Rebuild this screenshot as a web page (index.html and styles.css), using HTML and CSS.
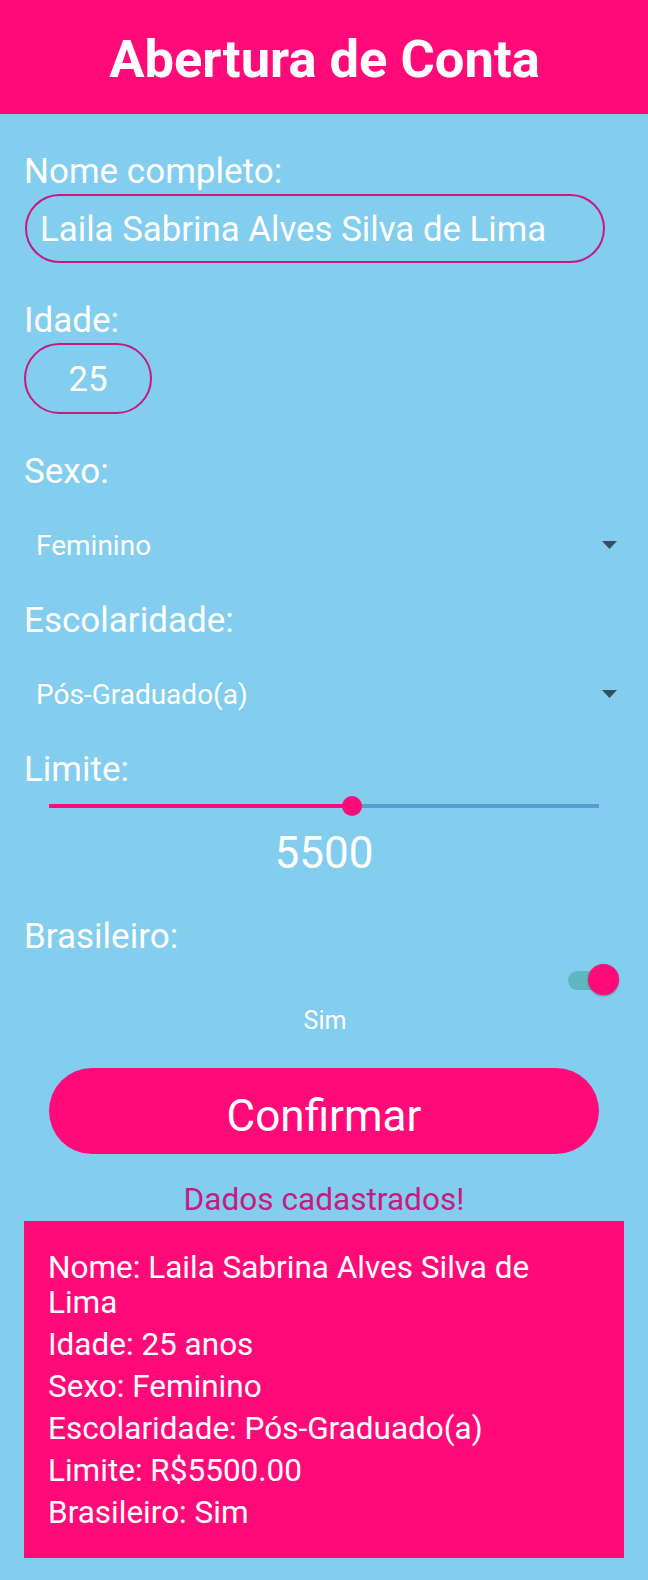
FILE: index.html
```html
<!DOCTYPE html>
<html lang="pt-BR">
<head>
<meta charset="utf-8">
<title>Abertura de Conta</title>
<link rel="stylesheet" href="styles.css">
</head>
<body>
<header class="app-bar">
  <h1 class="app-title">Abertura de Conta</h1>
</header>
<main class="form">
  <label class="label label-first">Nome completo:</label>
  <div class="input input-name">Laila Sabrina Alves Silva de Lima</div>

  <label class="label">Idade:</label>
  <div class="input input-age">25</div>

  <label class="label">Sexo:</label>
  <div class="dropdown">
    <span class="dropdown-text">Feminino</span>
    <svg class="dropdown-arrow" width="15" height="8" viewBox="0 0 15 8"><path d="M0 0 H15 L7.5 8 Z" fill="#34505f"/></svg>
  </div>

  <label class="label label-after-dd">Escolaridade:</label>
  <div class="dropdown">
    <span class="dropdown-text">Pós-Graduado(a)</span>
    <svg class="dropdown-arrow" width="15" height="8" viewBox="0 0 15 8"><path d="M0 0 H15 L7.5 8 Z" fill="#34505f"/></svg>
  </div>

  <label class="label label-after-dd">Limite:</label>
  <div class="slider">
    <div class="slider-track">
      <div class="slider-active" style="width: 55%"></div>
      <div class="slider-thumb" style="left: 55%"></div>
    </div>
  </div>
  <div class="slider-value">5500</div>

  <label class="label label-brasileiro">Brasileiro:</label>
  <div class="switch-row">
    <div class="switch">
      <div class="switch-track"></div>
      <div class="switch-thumb"></div>
    </div>
  </div>
  <div class="switch-state">Sim</div>

  <button class="confirm">Confirmar</button>

  <p class="status">Dados cadastrados!</p>

  <section class="summary">
    <p class="summary-line">Nome: Laila Sabrina Alves Silva de Lima</p>
    <p class="summary-line">Idade: 25 anos</p>
    <p class="summary-line">Sexo: Feminino</p>
    <p class="summary-line">Escolaridade: Pós-Graduado(a)</p>
    <p class="summary-line">Limite: R$5500.00</p>
    <p class="summary-line">Brasileiro: Sim</p>
  </section>
</main>
</body>
</html>
```

FILE: styles.css
```css
* { box-sizing: border-box; }

html, body {
  margin: 0;
  padding: 0;
}

body {
  background: #83cdee;
  font-family: Roboto, "Noto Sans", "Liberation Sans", sans-serif;
  color: #ffffff;
  min-height: 1580px;
}

.app-bar {
  background: #ff0a78;
  height: 114px;
  padding-top: 4px;
  text-align: center;
}

.app-title {
  margin: 0;
  font-size: 52.5px;
  font-weight: 700;
  line-height: 110px;
  padding-left: 1px;
}

.form {
  display: flex;
  flex-direction: column;
  align-items: stretch;
  padding: 0 24px 0 24px;
}

.label {
  display: block;
  font-size: 35px;
  line-height: 40px;
  margin-top: 38px;
  padding-left: 0;
}

.label-first { margin-top: 38px; }
.label-after-dd { margin-top: 25px; }
.label-brasileiro { margin-top: 39px; }

.input {
  margin-top: 2px;
  border: 2px solid #c8197f;
  border-radius: 36px;
  font-size: 34.8px;
  line-height: 40px;
  padding: 12.5px 0;
}

.input-name {
  margin-left: 1px;
  margin-right: 19px;
  padding-left: 13px;
}

.input-age {
  width: 128px;
  height: 71px;
  margin-top: 2px;
  text-align: center;
  padding: 13.5px 0;
}

.dropdown {
  margin-top: 24px;
  height: 60px;
  display: flex;
  align-items: center;
  justify-content: space-between;
  padding-left: 12px;
  padding-right: 7px;
}

.dropdown-text {
  font-size: 28px;
  line-height: 36px;
}

.dropdown-arrow {
  display: block;
  margin-top: -2px;
}

.slider {
  height: 32px;
  padding: 0 25px;
  display: flex;
  align-items: center;
}

.slider-track {
  position: relative;
  flex: 1;
  height: 4px;
  background: #5b9bd0;
}

.slider-active {
  height: 100%;
  background: #ff0a78;
}

.slider-thumb {
  position: absolute;
  top: 50%;
  width: 20px;
  height: 20px;
  margin: -10px 0 0 -10px;
  border-radius: 50%;
  background: #ff0a78;
}

.slider-value {
  margin-top: 6px;
  text-align: center;
  font-size: 44px;
  line-height: 50px;
}

.switch-row {
  margin-top: 7px;
  display: flex;
  justify-content: flex-end;
  padding-right: 5px;
}

.switch {
  position: relative;
  width: 51px;
  height: 32px;
  display: flex;
  align-items: center;
}

.switch-track {
  width: 40px;
  height: 19px;
  border-radius: 10px;
  background: #5fb7bf;
}

.switch-thumb {
  position: absolute;
  right: 0;
  top: 0;
  width: 31px;
  height: 31px;
  border-radius: 50%;
  background: #ff0a78;
  box-shadow: 0 1px 2px rgba(90, 20, 60, 0.45);
}

.switch-state {
  margin-top: 10px;
  text-align: center;
  font-size: 25px;
  line-height: 30px;
  padding-left: 2px;
}

.confirm {
  margin: 32px 25px 0 25px;
  height: 86px;
  border: none;
  border-radius: 43px;
  background: #ff0a78;
  color: #ffffff;
  font-family: inherit;
  font-size: 44px;
  padding: 10px 0 0 0;
  line-height: 50px;
}

.status {
  margin: 28px 0 0 0;
  text-align: center;
  color: #c81a83;
  font-size: 31.6px;
  line-height: 36px;
}

.summary {
  margin-top: 3px;
  background: #ff0a78;
  padding: 29px 30px 28px 24px;
  display: flex;
  flex-direction: column;
  gap: 7px;
}

.summary-line {
  margin: 0;
  font-size: 31.5px;
  line-height: 35px;
}
```
